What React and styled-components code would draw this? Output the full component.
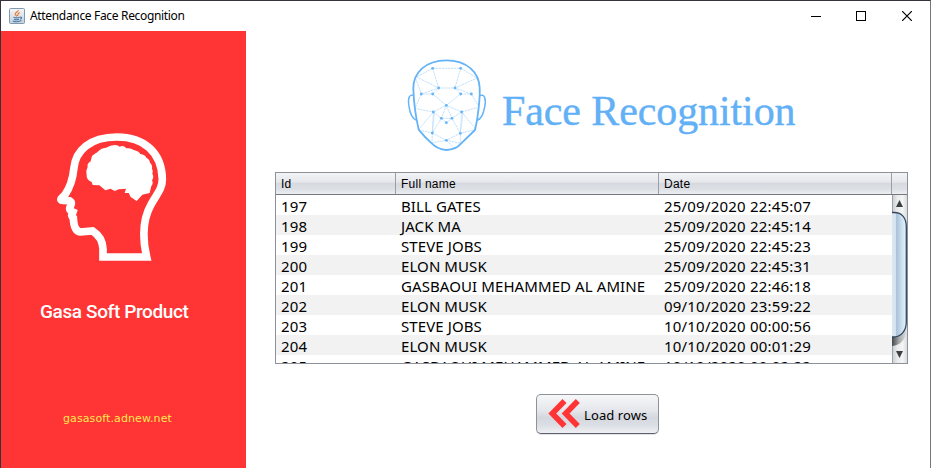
import React from "react";
import styled, { createGlobalStyle } from "styled-components";

const GlobalStyle = createGlobalStyle`
  * { box-sizing: border-box; }
  body { margin: 0; background: #fff; overflow: hidden; }
`;

const Window = styled.div`
  width: 931px;
  height: 468px;
  display: flex;
  flex-direction: column;
  background: #fff;
  border: 1px solid #37323e;
  border-right-color: #77777b;
  border-bottom: 0;
  font-family: "Noto Sans", "Open Sans", sans-serif;
  color: #000;
  white-space: nowrap;
`;

const TitleBar = styled.header`
  height: 30px;
  flex: none;
  display: flex;
  align-items: center;
  padding-left: 8px;
`;

const Title = styled.span`
  flex: 1;
  margin-left: 5px;
  font-size: 12px;
  line-height: 16px;
  letter-spacing: ${(p) => p.$spacing};
`;

const Controls = styled.div`
  display: flex;
  height: 100%;
`;

const Control = styled.button`
  width: 46px;
  height: 29px;
  padding: 0;
  border: 0;
  background: none;
  display: grid;
  place-items: center;
`;

const Body = styled.div`
  flex: 1;
  display: flex;
  min-height: 0;
`;

const Sidebar = styled.aside`
  width: 245px;
  flex: none;
  background: #ff3434;
  padding: 89px 0 0 39px;
  display: flex;
  flex-direction: column;
`;

const ProductName = styled.div`
  margin-top: 30px;
  height: 24px;
  font: 500 19px/24px Roboto, sans-serif;
  letter-spacing: -0.38px;
  color: #fff;
`;

const SiteLink = styled.div`
  margin: 86px 0 0 23px;
  font: 11px/18px "DejaVu Sans", sans-serif;
  letter-spacing: 0.1px;
  color: #ffe94f;
`;

const Main = styled.main`
  flex: 1;
  padding: 19px 22px 0 29px;
  display: flex;
  flex-direction: column;
`;

const Brand = styled.div`
  display: flex;
  margin-left: 120px;
  height: 110px;
`;

const BrandName = styled.h1`
  margin: 36px 0 0 7px;
  font: 400 42px/50px "Liberation Serif", serif;
  letter-spacing: -0.1px;
  color: #62b0f6;
  -webkit-text-stroke: 0.4px #62b0f6;
`;

const Table = styled.div`
  margin-top: 12px;
  width: 633px;
  height: 192px;
  flex: none;
  border: 1px solid #8d9199;
  display: flex;
  flex-direction: column;
`;

const TableHead = styled.div`
  height: 22px;
  flex: none;
  display: grid;
  grid-template-columns: 120px 263px 233px 15px;
  grid-template-rows: 21px;
  border-bottom: 1px solid #747981;
  background: linear-gradient(#f3f4f6 0, #e5e7eb 43%, #d6d9df 50%, #dde0e5 78%, #eceef1 100%);
`;

const HeadCell = styled.div`
  padding-left: 5px;
  border-right: ${(p) => (p.$last ? "0" : "1px solid #9a9ea6")};
  font: 12px/22px "Liberation Sans", sans-serif;
  letter-spacing: 0.25px;
`;

const TableBody = styled.div`
  flex: 1;
  min-height: 0;
  display: flex;
`;

const Rows = styled.div`
  width: 616px;
  overflow: hidden;
`;

const Row = styled.div`
  height: 20px;
  display: grid;
  grid-template-columns: 120px 263px 233px;
  &:nth-child(even) { background: #f2f2f2; }
`;

const Cell = styled.div`
  padding: 1px 0 0 5px;
  font-size: 15px;
  line-height: 21px;
  letter-spacing: ${(p) => p.$spacing};
`;

const LoadButton = styled.button`
  width: 123px;
  height: 40px;
  margin: 30px 0 0 261px;
  padding: 0 0 0 11px;
  display: flex;
  align-items: center;
  border: 1px solid #8f9299;
  border-bottom-color: #5b6069;
  border-radius: 5px;
  box-shadow: 0 1px 0 #e2e4e8;
  background: linear-gradient(#f6f7f9 0, #e5e7ec 40%, #d4d7de 60%, #dcdfe5 80%, #eff0f3 100%);
  font: 13px/18px "Noto Sans", sans-serif;
  color: #000;
`;

const ButtonText = styled.span`
  margin: 2px 0 0 3px;
  letter-spacing: 0.1px;
`;

const records = [
  ["197", "BILL GATES", "25/09/2020 22:45:07"],
  ["198", "JACK MA", "25/09/2020 22:45:14"],
  ["199", "STEVE JOBS", "25/09/2020 22:45:23"],
  ["200", "ELON MUSK", "25/09/2020 22:45:31"],
  ["201", "GASBAOUI MEHAMMED AL AMINE", "25/09/2020 22:46:18"],
  ["202", "ELON MUSK", "09/10/2020 23:59:22"],
  ["203", "STEVE JOBS", "10/10/2020 00:00:56"],
  ["204", "ELON MUSK", "10/10/2020 00:01:29"],
  ["205", "GASBAOUI MEHAMMED AL AMINE", "10/10/2020 00:02:22"],
];

const JavaIcon = () => (
  <svg width="16" height="16" viewBox="0 0 16 16" fill="none">
    <defs>
      <linearGradient id="tile" x1="0" y1="0" x2="0" y2="1">
        <stop offset="0" stopColor="#f4f6f8" />
        <stop offset="1" stopColor="#c3d0dc" />
      </linearGradient>
    </defs>
    <rect x=".5" y=".5" width="15" height="15" rx="1" fill="url(#tile)" stroke="#8298ab" />
    <path d="M9.3 2C9.8 3.6 5.6 4.4 6.2 6.2c.3 1 1.4 1.5 1.5 2.3M10.7 4.6C8 5.7 9.4 6.7 8.3 8" stroke="#e8762c" strokeWidth="1.1" />
    <path d="M4.5 9.3c1.8.7 4.7.6 6.2 0M5 11.2c1.4.6 3.6.6 5 0M11 9.2c2-.5 2.2 1.3.2 2M3.8 12.9c2.4.9 6.5.8 8.7-.3" stroke="#4c7ca8" strokeWidth="1.1" />
  </svg>
);

const HeadLogo = () => (
  <svg width="150" height="150" viewBox="0 0 450 450">
    <path
      d="M193 411L308 411L320 411C306 350 309 295 334 252C352 220 367 206 367 177C365 96 311 51 231 51C147 51 107 94 102 143C98 181 89 205 75 224L64 235Q60 241 68 241L88 242Q96 246 93 254L89 265Q88 271 99 276L97 282Q92 286 100 294C101 320 107 334 121 336L158 333C178 346 188 364 189 386V411H205"
      fill="none"
      stroke="#fff"
      strokeWidth="23"
    />
    <path
      d="M156 108Q165 101 172 97Q182 84 198 83Q211 75 225 75Q235 76 239 80Q250 74 259 85Q273 83 281 90Q297 93 301 102Q315 104 319 113Q329 118 330 128Q338 135 336 146Q341 154 337 161Q343 171 336 181Q341 191 334 198L329 219L307 224L290 243L272 231L266 219L254 219L258 206L236 208L224 213L212 206L196 211L178 196L158 195L155 186Q138 178 140 164Q137 151 143 141Q140 132 152 124Z"
      fill="#fff"
    />
  </svg>
);

const meshLines =
  "M113 55H197L180 114L229 132M113 55L65 81L131 114L113 132M113 55L131 114H180L197 132H229L249 165M197 55L246 84L180 114M62 85L79 132H113L154 166L197 132M79 132L61 173M131 114L79 132M58 175L115 186L154 166L200 186L246 173M154 166L139 205H171ZM139 205L154 218L171 205M115 186L139 205L112 249L154 271L196 250L171 205L200 186L196 250L243 238L200 186M115 186L70 240L112 249ZM112 249L111 278L154 271L196 280V250M118 190L112 249M204 190L196 250M154 271L180 298";

const meshNodes = [
  [113, 55], [197, 55], [131, 114], [180, 114], [79, 132], [113, 132], [197, 132], [229, 132],
  [154, 166], [115, 186], [200, 186], [139, 205], [171, 205], [154, 218], [112, 249], [196, 250], [154, 271],
];

const FaceLogo = () => (
  <svg width="100" height="110" viewBox="0 0 300 330" fill="none" stroke="#65b3f7">
    <path d={meshLines} stroke="#b9dcfb" strokeWidth="2.6" strokeDasharray="7 2" />
    <path
      d="M154 31C91 31 54 69 55 116C56 155 63 203 71 239Q90 263 111 281Q128 298 154 300Q183 299 198 281L240 240L246 211C251 178 256 145 254 113C252 68 217 31 154 31Z"
      strokeWidth="5.4"
    />
    <path d="M57 137C42 130 38 147 42 169C45 192 54 207 65 211M255 137C269 130 274 149 269 171C265 193 256 208 246 211" strokeWidth="4.4" />
    {meshNodes.map(([x, y]) => (
      <circle key={`${x}-${y}`} cx={x} cy={y} r="4.3" fill="#68b5f7" stroke="none" />
    ))}
  </svg>
);

const ScrollBar = () => (
  <svg width="15" height="168" viewBox="0 0 15 168">
    <defs>
      <linearGradient id="track">
        <stop offset="0" stopColor="#c9cccf" />
        <stop offset=".35" stopColor="#e8eaec" />
        <stop offset=".7" stopColor="#f4f5f5" />
        <stop offset="1" stopColor="#d9dde0" />
      </linearGradient>
      <linearGradient id="thumb">
        <stop offset="0" stopColor="#dce8f3" />
        <stop offset=".25" stopColor="#d6e3ef" />
        <stop offset=".32" stopColor="#a9c1d8" />
        <stop offset=".65" stopColor="#c9deee" />
        <stop offset="1" stopColor="#e4f6ff" />
      </linearGradient>
      <linearGradient id="shade">
        <stop offset="0" stopColor="#45484b" />
        <stop offset=".5" stopColor="#aaacae" />
        <stop offset="1" stopColor="#dfe1e2" />
      </linearGradient>
    </defs>
    <path d="M0 0H15V168H0Z" fill="url(#track)" />
    <path d="M.5 0V168" stroke="#9ca0a5" />
    <path d="M0 134H15Q13 150 0 151Z" fill="url(#shade)" />
    <path d="M0 18H2C10 18 14.3 23 14.3 32V127C14.3 136 9 142 1 142H0Z" fill="url(#thumb)" />
    <path d="M0 17.5H2C10 17.5 14.3 23 14.3 32V127C14.3 136 9 142 1 142H0" fill="none" stroke="#31475e" strokeWidth="1.3" />
    <path d="M7.5 5L11 12H4Z" fill="#3c3f43" />
    <path d="M4 156H11L7.5 163Z" fill="#3c3f43" />
  </svg>
);

const RewindIcon = () => (
  <svg width="33" height="30" viewBox="0 0 33 30" fill="none" stroke="#ff3535" strokeWidth="5.6">
    <path d="M16.5 2L4.3 14.5L16.5 27M29.8 2L17.6 14.5L29.8 27" />
  </svg>
);

export default function App() {
  return (
    <>
      <GlobalStyle />
      <Window>
        <TitleBar>
          <JavaIcon />
          <Title $spacing="-0.33px">Attendance Face Recognition</Title>
          <Controls>
            <Control aria-label="Minimize">
              <svg width="12" height="10" stroke="#000"><path d="M2 5.5H12" /></svg>
            </Control>
            <Control aria-label="Maximize">
              <svg width="10" height="10" stroke="#000" fill="none"><rect x=".5" y=".5" width="9" height="9" /></svg>
            </Control>
            <Control aria-label="Close">
              <svg width="10" height="10" stroke="#000" strokeWidth="1.2"><path d="M0 0L10 10M10 0L0 10" /></svg>
            </Control>
          </Controls>
        </TitleBar>
        <Body>
          <Sidebar>
            <HeadLogo />
            <ProductName>Gasa Soft Product</ProductName>
            <SiteLink>gasasoft.adnew.net</SiteLink>
          </Sidebar>
          <Main>
            <Brand>
              <FaceLogo />
              <BrandName>Face Recognition</BrandName>
            </Brand>
            <Table>
              <TableHead>
                <HeadCell>Id</HeadCell>
                <HeadCell>Full name</HeadCell>
                <HeadCell>Date</HeadCell>
                <HeadCell $last />
              </TableHead>
              <TableBody>
                <Rows>
                  {records.map(([id, name, date]) => (
                    <Row key={id}>
                      <Cell $spacing="0.2px">{id}</Cell>
                      <Cell $spacing="0.09px">{name}</Cell>
                      <Cell $spacing="0.2px">{date}</Cell>
                    </Row>
                  ))}
                </Rows>
                <ScrollBar />
              </TableBody>
            </Table>
            <LoadButton>
              <RewindIcon />
              <ButtonText>Load rows</ButtonText>
            </LoadButton>
          </Main>
        </Body>
      </Window>
    </>
  );
}
